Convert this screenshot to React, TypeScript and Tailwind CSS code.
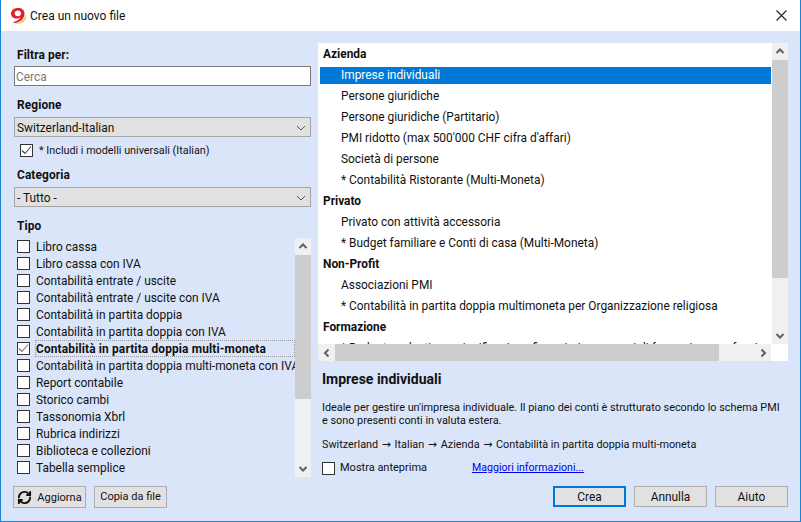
import React from 'react';
import { RefreshCw } from 'lucide-react';

const tipi = [
  'Libro cassa',
  'Libro cassa con IVA',
  'Contabilità entrate / uscite',
  'Contabilità entrate / uscite con IVA',
  'Contabilità in partita doppia',
  'Contabilità in partita doppia con IVA',
  'Contabilità in partita doppia multi-moneta',
  'Contabilità in partita doppia multi-moneta con IVA',
  'Report contabile',
  'Storico cambi',
  'Tassonomia Xbrl',
  'Rubrica indirizzi',
  'Biblioteca e collezioni',
  'Tabella semplice',
];

const modelli: { text: string; group?: boolean; selected?: boolean }[] = [
  { text: 'Azienda', group: true },
  { text: 'Imprese individuali', selected: true },
  { text: 'Persone giuridiche' },
  { text: 'Persone giuridiche (Partitario)' },
  { text: "PMI ridotto (max 500'000 CHF cifra d'affari)" },
  { text: 'Società di persone' },
  { text: '* Contabilità Ristorante (Multi-Moneta)' },
  { text: 'Privato', group: true },
  { text: 'Privato con attività accessoria' },
  { text: '* Budget familiare e Conti di casa (Multi-Moneta)' },
  { text: 'Non-Profit', group: true },
  { text: 'Associazioni PMI' },
  { text: '* Contabilità in partita doppia multimoneta per Organizzazione religiosa' },
  { text: 'Formazione', group: true },
  { text: '* Budget scolastico e pianificazione finanziaria per corsi di formazione professionale' },
];

const Check = ({ checked, light }: { checked?: boolean; light?: boolean }) => (
  <span className="w-[13px] h-[13px] shrink-0 border border-[#333333] bg-white flex items-center justify-center">
    {checked && (
      <svg width="11" height="11" viewBox="0 0 11 11" fill="none">
        <path d="M1 5.5 L4 8.5 L10 1.5" stroke={light ? '#777777' : '#444444'} strokeWidth="1.1" />
      </svg>
    )}
  </span>
);

const Chevron = ({ dir }: { dir: 'up' | 'down' | 'left' | 'right' }) => {
  const d = {
    up: 'M1.5 6 L5 2.5 L8.5 6',
    down: 'M1.5 3 L5 6.5 L8.5 3',
    left: 'M6.5 1.5 L3 5 L6.5 8.5',
    right: 'M3.5 1.5 L7 5 L3.5 8.5',
  }[dir];
  return (
    <svg width="10" height="10" viewBox="0 0 10 10" fill="none">
      <path d={d} stroke="#606060" strokeWidth="2" />
    </svg>
  );
};

const Select = ({ value }: { value: string }) => (
  <div className="h-[20px] border border-[#a5a5a5] bg-[#e1e1e1] flex items-center justify-between pl-[2px] pr-[4px] pt-[2px] text-[#111111]">
    <span>{value}</span>
    <svg width="10" height="6" viewBox="0 0 10 6" fill="none">
      <path d="M1 1 L5 5 L9 1" stroke="#555555" strokeWidth="1" />
    </svg>
  </div>
);

const Button = ({ children, primary, className = '' }: { children: React.ReactNode; primary?: boolean; className?: string }) => (
  <button
    className={`h-[21px] w-[73px] bg-[#e1e1e1] flex items-center justify-center text-[#111111] ${
      primary ? 'border-2 border-[#0078d7]' : 'border border-[#adadad]'
    } ${className}`}
  >
    {children}
  </button>
);

const Arrow = () => <span className="font-['DejaVu_Sans'] mx-px">→</span>;

export default function App() {
  return (
    <div
      className="w-[801px] h-[522px] flex flex-col bg-[#dae5f9] border border-t-0 border-[#1883d7] text-[11.9px] leading-[16px] text-[#111111] overflow-hidden"
      style={{ fontFamily: 'Roboto, "Noto Sans", sans-serif' }}
    >
      {/* title bar */}
      <div className="h-[31px] shrink-0 bg-white flex items-center pl-[8px] pr-[13px]">
        <svg width="18" height="18" viewBox="0 0 18 18" fill="none">
          <path d="M3 17 C9 17 15 14 16.5 7 L17 11 C16 15 11 18 3 17 Z" fill="#e8cf6a" />
          <path d="M9 1 C4.5 1 2 3.5 2 6.5 C2 9.5 4.5 11.5 8 11.5 C9.5 11.5 10.5 11 11.5 10 C10.8 12.3 8.5 14.3 4 15 L5.5 16 C11.5 15.5 15.5 11.5 15.5 6.5 C15.5 3 13 1 9 1 Z M9 3.5 C11 3.5 12 4.8 12 6.4 C12 8 10.8 9.2 9 9.2 C7 9.2 5.7 8 5.7 6.4 C5.7 4.8 7 3.5 9 3.5 Z" fill="#e0202e" />
        </svg>
        <span className="ml-[3px] text-[12px] text-[#111111]">Crea un nuovo file</span>
        <svg className="ml-auto" width="11" height="11" viewBox="0 0 11 11" fill="none">
          <path d="M0.5 0.5 L10.5 10.5 M10.5 0.5 L0.5 10.5" stroke="#222222" strokeWidth="1.1" />
        </svg>
      </div>

      <div className="flex-1 flex pt-[12px] pl-[13px] pr-[12px] gap-[7px]">
        {/* left column */}
        <div className="w-[297px] shrink-0 flex flex-col">
          <div className="h-[23px] pl-[3px] font-bold tracking-[0.1px] flex items-center">Filtra per:</div>
          <div className="h-[20px] border border-[#7a7a7a] bg-white pl-[1px] pt-[2px] flex items-center text-[#7a7a7a]">Cerca</div>
          <div className="h-[31px] pl-[3px] pb-[4px] font-bold tracking-[0.1px] flex items-end">Regione</div>
          <Select value="Switzerland-Italian" />
          <div className="h-[26px] pl-[6px] flex items-center gap-[6px] text-[10.8px]">
            <Check checked />
            <span className="pt-[1px]">* Includi i modelli universali (Italian)</span>
          </div>
          <div className="h-[24px] pl-[3px] font-bold tracking-[0.1px] flex items-center">Categoria</div>
          <Select value="- Tutto -" />
          <div className="h-[31px] pl-[3px] pb-[4px] font-bold tracking-[0.1px] flex items-end">Tipo</div>

          {/* tipo list */}
          <div className="h-[239px] flex">
            <div className="flex-1 min-w-0 overflow-hidden">
              {tipi.map((t, i) => (
                <div key={t} className="h-[17px] pl-[3px] flex items-center gap-[5px]">
                  <Check checked={i === 6} light />
                  <span
                    className={`h-[17px] pl-[1px] flex-1 flex items-center whitespace-nowrap overflow-hidden ${
                      i === 6 ? 'font-bold tracking-[0.15px] outline-1 outline-dotted outline-[#999999] -outline-offset-1' : ''
                    }`}
                  >
                    {t}
                  </span>
                </div>
              ))}
            </div>
            <div className="w-[16px] shrink-0 bg-[#f0f0f0] flex flex-col">
              <div className="h-[17px] flex items-center justify-center">
                <Chevron dir="up" />
              </div>
              <div className="h-[144px] bg-[#cdcdcd]" />
              <div className="flex-1" />
              <div className="h-[17px] flex items-center justify-center">
                <Chevron dir="down" />
              </div>
            </div>
          </div>

          <div className="mt-[9px] flex gap-[8px] -ml-px">
            <Button className="!h-[22px] gap-[5px] pt-[1px] text-[11px]">
              <RefreshCw size={15} strokeWidth={3} color="#111111" />
              <span>Aggiorna</span>
            </Button>
            <Button className="!h-[22px] text-[11px]">Copia da file</Button>
          </div>
        </div>

        {/* right column */}
        <div className="flex-1 min-w-0 flex flex-col">
          <div className="h-[318px] bg-white flex flex-col">
            <div className="flex h-[301px]">
              <div className="flex-1 min-w-0 overflow-hidden pl-[2px] pr-[1px] pt-[1px]">
                {modelli.map(m => (
                  <div
                    key={m.text}
                    className={`whitespace-nowrap flex items-center pb-[2px] ${
                      m.selected ? 'h-[17px] my-[2px] bg-[#0078d7] text-white' : 'h-[21px]'
                    } ${m.group ? 'pl-[3px] font-bold' : 'pl-[21px]'}`}
                  >
                    {m.text}
                  </div>
                ))}
              </div>
              <div className="w-[16px] shrink-0 bg-[#f0f0f0] flex flex-col">
                <div className="h-[17px] flex items-center justify-center">
                  <Chevron dir="up" />
                </div>
                <div className="h-[218px] bg-[#cdcdcd]" />
                <div className="flex-1" />
                <div className="h-[17px] flex items-center justify-center">
                  <Chevron dir="down" />
                </div>
              </div>
            </div>
            <div className="h-[17px] flex">
              <div className="w-[453px] bg-[#f0f0f0] flex">
                <div className="w-[17px] flex items-center justify-center">
                  <Chevron dir="left" />
                </div>
                <div className="w-[384px] bg-[#cdcdcd]" />
                <div className="flex-1" />
                <div className="w-[17px] flex items-center justify-center">
                  <Chevron dir="right" />
                </div>
              </div>
            </div>
          </div>

          {/* detail */}
          <div className="pl-[4px]">
            <div className="h-[19px] mt-[8px] text-[14px] font-bold flex items-center">Imprese individuali</div>
            <div className="mt-[13px] text-[10.85px] leading-[13px] w-[466px]">
              <div className="whitespace-nowrap">Ideale per gestire un'impresa individuale. Il piano dei conti è strutturato secondo lo schema PMI</div>
              <div>e sono presenti conti in valuta estera.</div>
            </div>
            <div className="mt-[11px] h-[13px] text-[10.85px] leading-[13px] whitespace-nowrap">
              Switzerland <Arrow /> Italian <Arrow /> Azienda <Arrow /> Contabilità in partita doppia multi-moneta
            </div>
            <div className="mt-[10px] h-[14px] flex items-center text-[11px]">
              <Check />
              <span className="ml-[5px]">Mostra anteprima</span>
              <a className="ml-[45px] text-[10.6px] text-[#0000ee] underline">Maggiori informazioni...</a>
            </div>
          </div>
          <div className="mt-[11px] flex justify-end gap-[8px]">
            <Button primary>Crea</Button>
            <Button>Annulla</Button>
            <Button>Aiuto</Button>
          </div>
        </div>
      </div>
    </div>
  );
}
